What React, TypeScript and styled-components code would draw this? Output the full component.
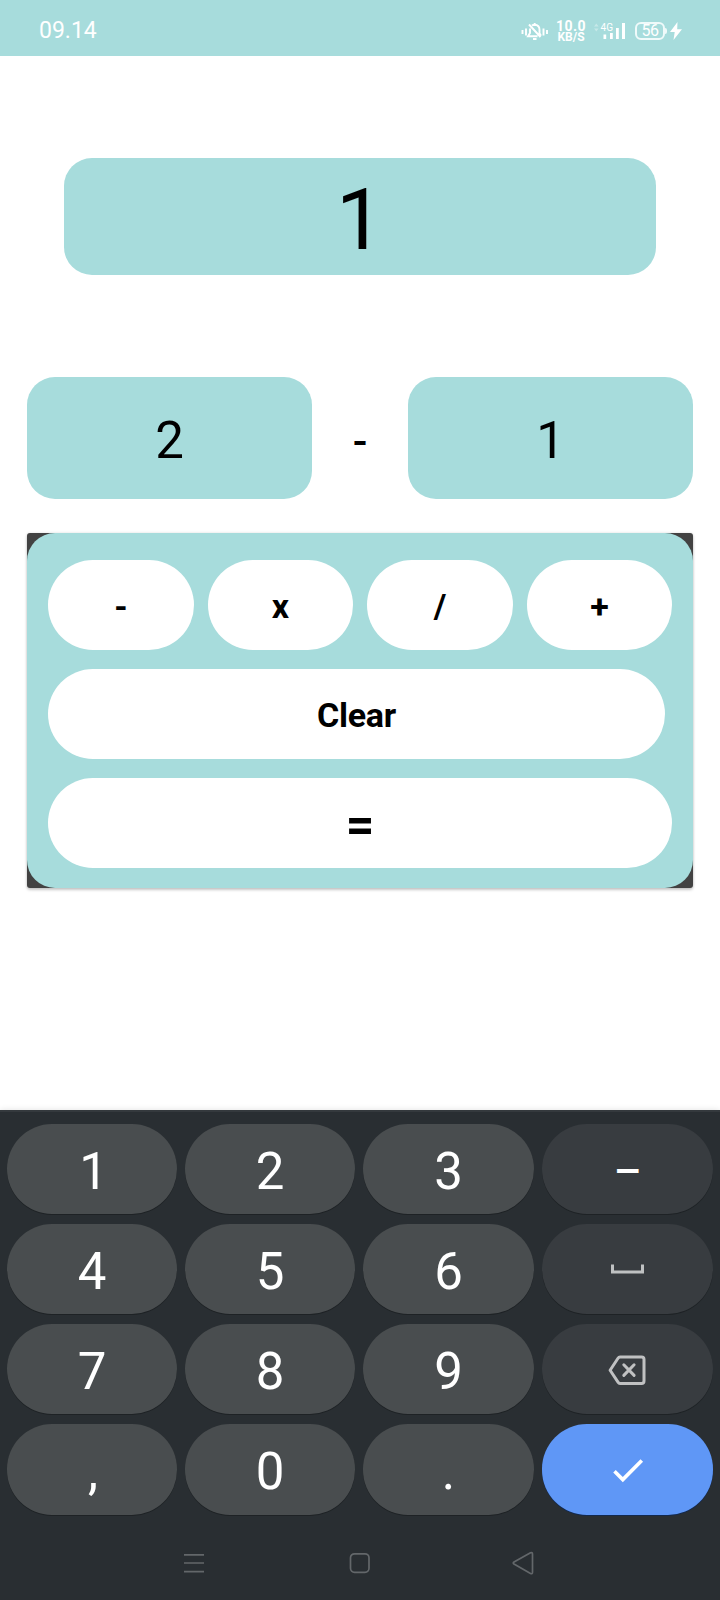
import React from "react";
import styled, { createGlobalStyle } from "styled-components";

const teal = "#a7dcdc";

const GlobalStyle = createGlobalStyle`
  * { box-sizing: border-box; }
  body { margin: 0; background: #fff; }
  button { border: 0; padding: 0; margin: 0; font-family: inherit; color: inherit; }
`;

const Screen = styled.div`
  width: 720px;
  height: 1600px;
  display: flex;
  flex-direction: column;
  overflow: hidden;
  background: #fff;
  color: #000;
  font-family: Roboto, sans-serif;
`;

const StatusBar = styled.header`
  height: 56px;
  flex: none;
  display: flex;
  justify-content: space-between;
  padding: 0 38px;
  background: ${teal};
  color: #fff;
`;

const Clock = styled.time`
  padding: 5px 0 0 1px;
  font: 400 23px/52px Roboto, sans-serif;
`;

const StatusIcons = styled.div`
  display: flex;
  align-items: flex-start;
  padding-top: 20px;
`;

const BellIcon = styled.svg`
  width: 28px;
  height: 22px;
  margin-right: 7px;
`;

const Speed = styled.div`
  width: 32px;
  display: flex;
  flex-direction: column;
  align-items: center;
  font-weight: 700;
  white-space: nowrap;
`;

const SpeedText = styled.span<{ $size: number; $line: number; $spacing?: number }>`
  font-size: ${(p) => p.$size}px;
  line-height: ${(p) => p.$line}px;
  letter-spacing: ${(p) => p.$spacing ?? 0}px;
`;

const SignalIcon = styled.svg`
  width: 34px;
  height: 22px;
  margin-left: 6px;
`;

const Battery = styled.div`
  position: relative;
  width: 30px;
  height: 18px;
  margin: 2px 0 0 8px;
  border: 2px solid #effafa;
  border-radius: 6px;
  text-align: center;
  font: 400 16px/14px Roboto, sans-serif;
  letter-spacing: -0.5px;

  &::after {
    content: "";
    position: absolute;
    right: -4px;
    top: 4px;
    width: 2px;
    height: 6px;
    border-radius: 0 2px 2px 0;
    background: #effafa;
  }
`;

const BoltIcon = styled.svg`
  width: 12px;
  height: 18px;
  margin: 2px 0 0 5px;
`;

const Calculator = styled.main`
  flex: 1;
  display: flex;
  flex-direction: column;
  padding: 102px 27px 0;
`;

const Result = styled.output`
  height: 117px;
  margin: 0 37px;
  padding-top: 7px;
  display: flex;
  align-items: center;
  justify-content: center;
  border-radius: 28px;
  background: ${teal};
  font-size: 85px;
  line-height: 1;
`;

const Operands = styled.div`
  display: grid;
  grid-template-columns: 285px 1fr 285px;
  height: 122px;
  margin-top: 102px;
  text-align: center;
  line-height: 122px;
`;

const Operand = styled.div`
  height: 122px;
  padding-top: 3px;
  border-radius: 28px;
  background: ${teal};
  font-size: 51px;
`;

const Operator = styled.div`
  padding-top: 3px;
  font-size: 43px;
  font-weight: 500;
`;

const Card = styled.section`
  height: 355px;
  margin-top: 34px;
  border-radius: 3px;
  background: #424242;
  box-shadow: 0 2px 3px rgba(0, 0, 0, 0.2), 0 0 3px rgba(0, 0, 0, 0.12);
`;

const Panel = styled.div`
  height: 355px;
  display: flex;
  flex-direction: column;
  gap: 19px;
  padding: 27px 21px 0;
  border-radius: 28px;
  background: ${teal};
`;

const OperatorRow = styled.div`
  display: grid;
  grid-template-columns: 146px 145px 146px 145px;
  gap: 14px;
`;

const PanelButton = styled.button<{ $size?: number; $inset?: number; $drop?: number }>`
  height: 90px;
  margin-right: ${(p) => p.$inset ?? 0}px;
  padding-top: ${(p) => p.$drop ?? 3}px;
  border-radius: 45px;
  background: #fff;
  font-size: ${(p) => p.$size ?? 34}px;
  font-weight: 700;
  line-height: 85px;
`;

const ClearLabel = styled.span`
  letter-spacing: -0.3px;
`;

const Keyboard = styled.footer`
  height: 490px;
  flex: none;
  padding: 12px 7px 0;
  border-top: 2px solid #34393d;
  background: #292e32;
  box-shadow: 0 0 6px rgba(0, 0, 0, 0.12);
`;

const Keys = styled.div`
  display: grid;
  grid-template-columns: 170px 170px 171px 171px;
  grid-template-rows: 90px 90px 90px 91px;
  gap: 10px 8px;
`;

const tones = { digit: "#494d4f", side: "#383c40", enter: "#5f97f6" };

const Key = styled.button<{ $tone: keyof typeof tones; $size?: number; $weight?: number; $nudge?: number }>`
  display: flex;
  align-items: center;
  justify-content: center;
  padding-top: 4px;
  padding-left: ${(p) => p.$nudge ?? 0}px;
  border-radius: 45px;
  background: ${(p) => tones[p.$tone]};
  box-shadow: 0 1px 0 ${(p) => (p.$tone === "enter" ? "#12294f" : "#1e2225")};
  color: #fff;
  font-size: ${(p) => p.$size ?? 51}px;
  font-weight: ${(p) => p.$weight ?? 400};
  line-height: 1;
`;

const KeyIcon = styled.svg`
  width: 48px;
  height: 48px;
  fill: none;
`;

const NavBar = styled.nav`
  display: flex;
  justify-content: space-between;
  padding: 35px 176px 0 174px;
`;

const NavIcon = styled.svg`
  width: 26px;
  height: 26px;
  fill: none;
  stroke: #63676a;
  stroke-width: 1.7;
`;

const SpaceIcon = () => (
  <KeyIcon viewBox="0 0 48 48">
    <path d="M8.500 17.500v7.500h30v-7.500" stroke="#bfc1c2" strokeWidth="3" />
  </KeyIcon>
);

const BackspaceIcon = () => (
  <KeyIcon viewBox="0 0 48 48" stroke="#c0c1c2" strokeWidth="3" strokeLinejoin="round" strokeLinecap="round">
    <path d="M16 10h21.500a2.500 2.500 0 0 1 2.500 2.500v21.400a2.500 2.500 0 0 1-2.500 2.500h-21.500q-1.200 0-2-1.200l-7.900-12 7.900-12q.8-1.200 2-1.200Z" />
    <path d="M19.800 17.800l10.300 10.600M30.100 17.800l-10.300 10.600" />
  </KeyIcon>
);

const CheckIcon = () => (
  <KeyIcon viewBox="0 0 48 48">
    <path d="M10.500 23.300l8.300 8.300 19-19.200" stroke="#fff" strokeWidth="3.600" />
  </KeyIcon>
);

type KeyDef = {
  label: React.ReactNode;
  tone: keyof typeof tones;
  name: string;
  size?: number;
  weight?: number;
  nudge?: number;
};

const digit = (label: string, nudge = 0): KeyDef => ({ label, tone: "digit", name: label, nudge });

const keys: KeyDef[] = [
  digit("1", 3), digit("2"), digit("3"), { label: "–", tone: "side", name: "minus", size: 43, weight: 500 },
  digit("4"), digit("5"), digit("6"), { label: <SpaceIcon />, tone: "side", name: "space" },
  digit("7"), digit("8"), digit("9"), { label: <BackspaceIcon />, tone: "side", name: "backspace" },
  digit(",", 2), digit("0"), digit("."), { label: <CheckIcon />, tone: "enter", name: "enter" },
];

export default function App() {
  return (
    <Screen>
      <GlobalStyle />
      <StatusBar>
        <Clock>09.14</Clock>
        <StatusIcons>
          <BellIcon viewBox="0 0 28 22" fill="none" stroke="#fff" strokeWidth="1.900">
            <path d="M2.500 10v4M6 8.500v7M23.500 8.500v7M27 10v4" />
            <path d="M12 5.500q1-.8 2.700-.8 4.800.3 4.800 5v3.500l1.500 2.500M17.500 16.300H8l2-3.300v-4.500M9 4.500l11.500 12.500M13 19h3.500M14.700 3v2" />
          </BellIcon>
          <Speed>
            <SpeedText $size={14} $line={12} $spacing={0.5}>10.0</SpeedText>
            <SpeedText $size={12} $line={10}>KB/S</SpeedText>
          </Speed>
          <SignalIcon viewBox="0 0 34 22" fill="#fff">
            <path d="M1 6.500l2.300-3 2.300 3zM1 8.500l2.300 3 2.300-3z" opacity=".35" />
            <text x="7.500" y="11" fontSize="11.500" fontFamily="Roboto" textLength="12.500" lengthAdjust="spacingAndGlyphs">4G</text>
            <path d="M10.500 14.500h2.700V19h-2.700zM17 13h2.800v6H17zM23 8h2.800v11H23zM29 3h3v16h-3z" />
          </SignalIcon>
          <Battery>56</Battery>
          <BoltIcon viewBox="0 0 12 18">
            <path d="M7.500 0L0 10h4.700L3.500 18 12 7.300H7.200z" fill="#fff" />
          </BoltIcon>
        </StatusIcons>
      </StatusBar>
      <Calculator>
        <Result>1</Result>
        <Operands>
          <Operand>2</Operand>
          <Operator>-</Operator>
          <Operand>1</Operand>
        </Operands>
        <Card>
          <Panel>
            <OperatorRow>
              {["-", "x", "/", "+"].map((op) => (
                <PanelButton key={op}>{op}</PanelButton>
              ))}
            </OperatorRow>
            <PanelButton $inset={7}><ClearLabel>Clear</ClearLabel></PanelButton>
            <PanelButton $size={50} $drop={5}>=</PanelButton>
          </Panel>
        </Card>
      </Calculator>
      <Keyboard>
        <Keys>
          {keys.map((k) => (
            <Key
              key={k.name}
              $tone={k.tone}
              $size={k.size}
              $weight={k.weight}
              $nudge={k.nudge}
              aria-label={k.name}
            >
              {k.label}
            </Key>
          ))}
        </Keys>
        <NavBar>
          <NavIcon viewBox="0 0 26 26"><path d="M3 4.800h20M3 13h20M3 21.700h20" /></NavIcon>
          <NavIcon viewBox="0 0 26 26"><rect x="4.500" y="3.800" width="18.500" height="18.500" rx="4" /></NavIcon>
          <NavIcon viewBox="0 0 26 26"><path d="M19.500 2.800L3 12q-1.500 1 0 2l16.500 9.500q2 .8 2-1.300v-18q0-2.300-2-1.400Z" /></NavIcon>
        </NavBar>
      </Keyboard>
    </Screen>
  );
}
